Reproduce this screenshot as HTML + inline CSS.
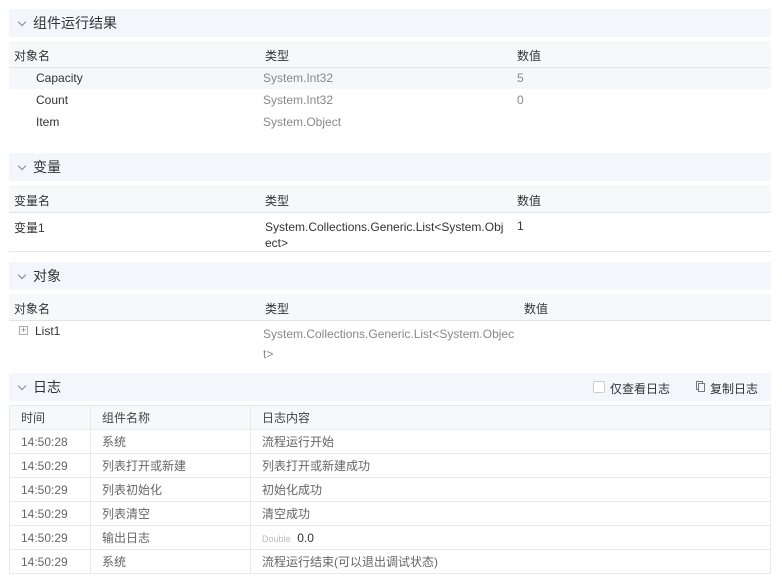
<!DOCTYPE html>
<html><head><meta charset="utf-8"><style>
*{margin:0;padding:0;box-sizing:border-box}
body{width:782px;height:577px;background:#fff;font-family:"Liberation Sans","Noto Sans CJK SC",sans-serif;font-size:12px;color:#333;position:relative;overflow:hidden}
.a{position:absolute;white-space:nowrap}
.sh{position:absolute;left:9px;width:762px;height:28px;background:#f3f6fa;font-size:14px;color:#333;line-height:28px;padding-left:24px}
.sh:before{content:"";position:absolute;left:10px;top:10px;width:5px;height:5px;border-left:1px solid #888;border-bottom:1px solid #888;transform:rotate(-45deg)}
.th{position:absolute;left:9px;width:762px;background:#f7f8fa;border-bottom:1px solid #e0e3e8}
.g{color:#888}
.ln{position:absolute;left:9px;width:762px;height:1px;background:#e3e6eb}
table{position:absolute;left:9px;top:405px;width:762px;border-collapse:collapse}
td{border:1px solid #e8eaee;height:24px;padding-left:11px;color:#666}
tr.h td{background:#f7f8fa;color:#444}
</style></head><body>
<div class="sh" style="top:9px">组件运行结果</div>
<div class="th" style="top:41px;height:27px"></div>
<div class="a" style="left:14px;top:47px">对象名</div><div class="a" style="left:265px;top:47px">类型</div><div class="a" style="left:517px;top:47px">数值</div>
<div class="a" style="left:9px;top:68px;width:762px;height:21px;background:#f5f7fa"></div>
<div class="a" style="left:36px;top:71px">Capacity</div><div class="a g" style="left:263px;top:71px">System.Int32</div><div class="a g" style="left:517px;top:71px">5</div>
<div class="a" style="left:36px;top:93px">Count</div><div class="a g" style="left:263px;top:93px">System.Int32</div><div class="a g" style="left:517px;top:93px">0</div>
<div class="a" style="left:36px;top:115px">Item</div><div class="a g" style="left:263px;top:115px">System.Object</div>

<div class="sh" style="top:153px">变量</div>
<div class="th" style="top:185px;height:28px"></div>
<div class="a" style="left:14px;top:192px">变量名</div><div class="a" style="left:265px;top:192px">类型</div><div class="a" style="left:517px;top:192px">数值</div>
<div class="a" style="left:14px;top:219px">变量1</div>
<div class="a" style="left:265px;top:219px;line-height:16px">System.Collections.Generic.List&lt;System.Obj<br>ect&gt;</div>
<div class="a" style="left:517px;top:219px">1</div>
<div class="ln" style="top:251px"></div>

<div class="sh" style="top:262px">对象</div>
<div class="th" style="top:294px;height:27px"></div>
<div class="a" style="left:14px;top:300px">对象名</div><div class="a" style="left:265px;top:300px">类型</div><div class="a" style="left:524px;top:300px">数值</div>
<div class="a" style="left:19px;top:326px;width:9px;height:9px;border:1px solid #aaa;font-size:9px;line-height:7px;text-align:center;color:#777">+</div>
<div class="a" style="left:35px;top:324px">List1</div>
<div class="a g" style="left:263px;top:324px;line-height:20px">System.Collections.Generic.List&lt;System.Objec<br>t&gt;</div>

<div class="sh" style="top:373px">日志</div>
<div class="a" style="left:593px;top:381px;width:12px;height:12px;border:1px solid #ccc;border-radius:2px;background:#fff"></div>
<div class="a" style="left:610px;top:380px;font-size:12px">仅查看日志</div>
<div class="a" style="left:696px;top:381px;width:7px;height:9px;border:1px solid #777"></div>
<div class="a" style="left:698px;top:383px;width:7px;height:9px;border:1px solid #777;background:#f3f6fa"></div>
<div class="a" style="left:710px;top:380px">复制日志</div>
<table>
<tr class="h"><td style="width:81px">时间</td><td style="width:160px">组件名称</td><td>日志内容</td></tr>
<tr><td>14:50:28</td><td>系统</td><td>流程运行开始</td></tr>
<tr><td>14:50:29</td><td>列表打开或新建</td><td>列表打开或新建成功</td></tr>
<tr><td>14:50:29</td><td>列表初始化</td><td>初始化成功</td></tr>
<tr><td>14:50:29</td><td>列表清空</td><td>清空成功</td></tr>
<tr><td>14:50:29</td><td>输出日志</td><td><span style="font-size:9px;color:#bbb">Double</span>&nbsp; <span style="color:#333">0.0</span></td></tr>
<tr><td>14:50:29</td><td>系统</td><td>流程运行结束(可以退出调试状态)</td></tr>
</table>
</body></html>
